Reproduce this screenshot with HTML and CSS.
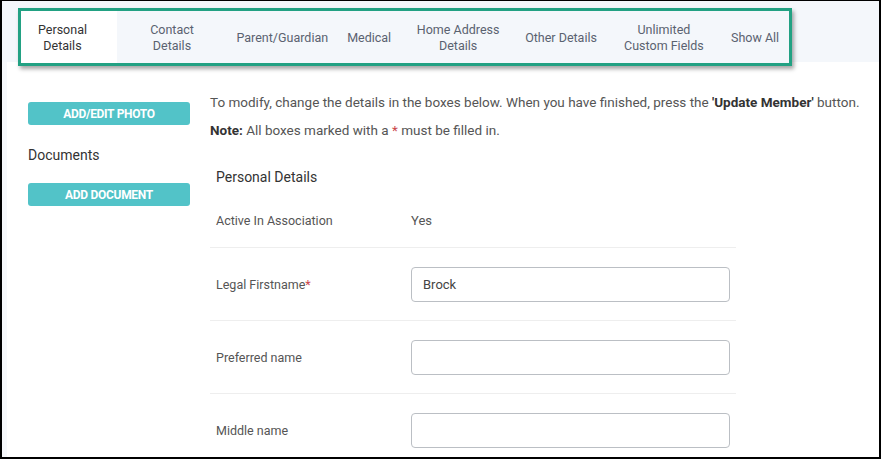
FILE: index.html
```html
<!DOCTYPE html>
<html>
<head>
<meta charset="utf-8">
<link rel="stylesheet" href="styles.css">
</head>
<body>
<div class="frame">
  <header class="band">
    <nav class="tabs">
      <div class="tab active">Personal Details</div>
      <div class="tab contact">Contact Details</div>
      <div class="tab">Parent/Guardian</div>
      <div class="tab">Medical</div>
      <div class="tab">Home Address Details</div>
      <div class="tab">Other Details</div>
      <div class="tab">Unlimited Custom Fields</div>
      <div class="tab">Show All</div>
    </nav>
  </header>
  <div class="content">
    <aside class="side">
      <button class="btn">ADD/EDIT PHOTO</button>
      <div class="side-title">Documents</div>
      <button class="btn">ADD DOCUMENT</button>
    </aside>
    <main class="main">
      <p class="intro">To modify, change the details in the boxes below. When you have finished, press the <b>'Update Member'</b> button.</p>
      <p class="intro note"><b>Note:</b> All boxes marked with a <span class="req">*</span> must be filled in.</p>
      <h3 class="section">Personal Details</h3>
      <div class="rows">
        <div class="row first">
          <div class="label">Active In Association</div>
          <div class="value">Yes</div>
        </div>
        <div class="row">
          <div class="label">Legal Firstname<span class="req">*</span></div>
          <div class="value"><input class="field" type="text" value="Brock"></div>
        </div>
        <div class="row">
          <div class="label">Preferred name</div>
          <div class="value"><input class="field" type="text" value=""></div>
        </div>
        <div class="row">
          <div class="label">Middle name</div>
          <div class="value"><input class="field" type="text" value=""></div>
        </div>
      </div>
    </main>
  </div>
</div>
</body>
</html>
```

FILE: styles.css
```css
* { box-sizing: border-box; }
html, body {
  margin: 0;
  padding: 0;
  background: #ffffff;
}
body {
  font-family: Roboto, "Liberation Sans", Arial, sans-serif;
  color: #555555;
}
.frame {
  width: 881px;
  height: 459px;
  border-style: solid;
  border-color: #000000;
  border-width: 1px 2px 2px 2px;
  overflow: hidden;
  display: flex;
  flex-direction: column;
}
.band {
  background: #f4f7fb;
  height: 61px;
  flex: none;
  padding-top: 7px;
  padding-left: 16px;
  position: relative;
  z-index: 1;
}
.tabs {
  display: flex;
  width: fit-content;
  height: 58px;
  border: 3px solid #22a183;
  background: #f4f7fb;
  box-shadow: 2px 3px 4px rgba(0, 0, 0, 0.35);
}
.tab {
  display: flex;
  align-items: center;
  justify-content: center;
  text-align: center;
  box-sizing: content-box;
  max-width: 96px;
  padding: 2px 9.5px 0;
  font-size: 12.5px;
  line-height: 16.5px;
  color: #5a6270;
}
.tab.contact {
  box-sizing: border-box;
  width: 110px;
  max-width: none;
  padding: 2px 26px 0;
}
.tab.active {
  background: #ffffff;
  color: #333333;
  box-sizing: border-box;
  width: 96px;
  max-width: none;
  padding: 2px 17px 0 4px;
}
.content {
  flex: 1;
  display: flex;
  gap: 20px;
  border-left: 5px solid #f6f8fb;
  padding-left: 21px;
}
.side {
  width: 162px;
  flex: none;
  padding-top: 40px;
  display: flex;
  flex-direction: column;
}
.btn {
  height: 23px;
  width: 100%;
  border: none;
  border-radius: 3px;
  background: #52c3c8;
  color: #ffffff;
  font-family: Roboto, "Liberation Sans", Arial, sans-serif;
  font-weight: 700;
  font-size: 12px;
  letter-spacing: -0.3px;
  padding: 0;
}
.side-title {
  font-size: 14px;
  line-height: 20px;
  color: #333333;
  margin: 20px 0 18px;
}
.main {
  width: 660px;
  flex: none;
  padding-top: 31px;
}
.intro {
  margin: 0;
  font-size: 13.5px;
  line-height: 18px;
  color: #555555;
  white-space: nowrap;
}
.intro b { color: #333333; }
.intro.note { margin-top: 10px; }
.req { color: #c9454a; }
.section {
  margin: 28px 0 6px;
  padding-left: 6px;
  font-size: 14px;
  line-height: 20px;
  font-weight: 400;
  color: #333333;
}
.rows { width: 526px; }
.row {
  display: flex;
  align-items: center;
  height: 73px;
  border-top: 1px solid #eeeeee;
}
.row.first {
  height: 54px;
  border-top: none;
}
.label {
  width: 201px;
  flex: none;
  padding-left: 6px;
  font-size: 12.5px;
  color: #555555;
}
.value {
  font-size: 13px;
  color: #555555;
}
.field {
  display: block;
  width: 319px;
  height: 35px;
  border: 1px solid #bbbfc4;
  border-radius: 4px;
  padding: 0 11px;
  font-family: Roboto, "Liberation Sans", Arial, sans-serif;
  font-size: 13px;
  color: #444444;
  background: #ffffff;
  outline: none;
}
```
